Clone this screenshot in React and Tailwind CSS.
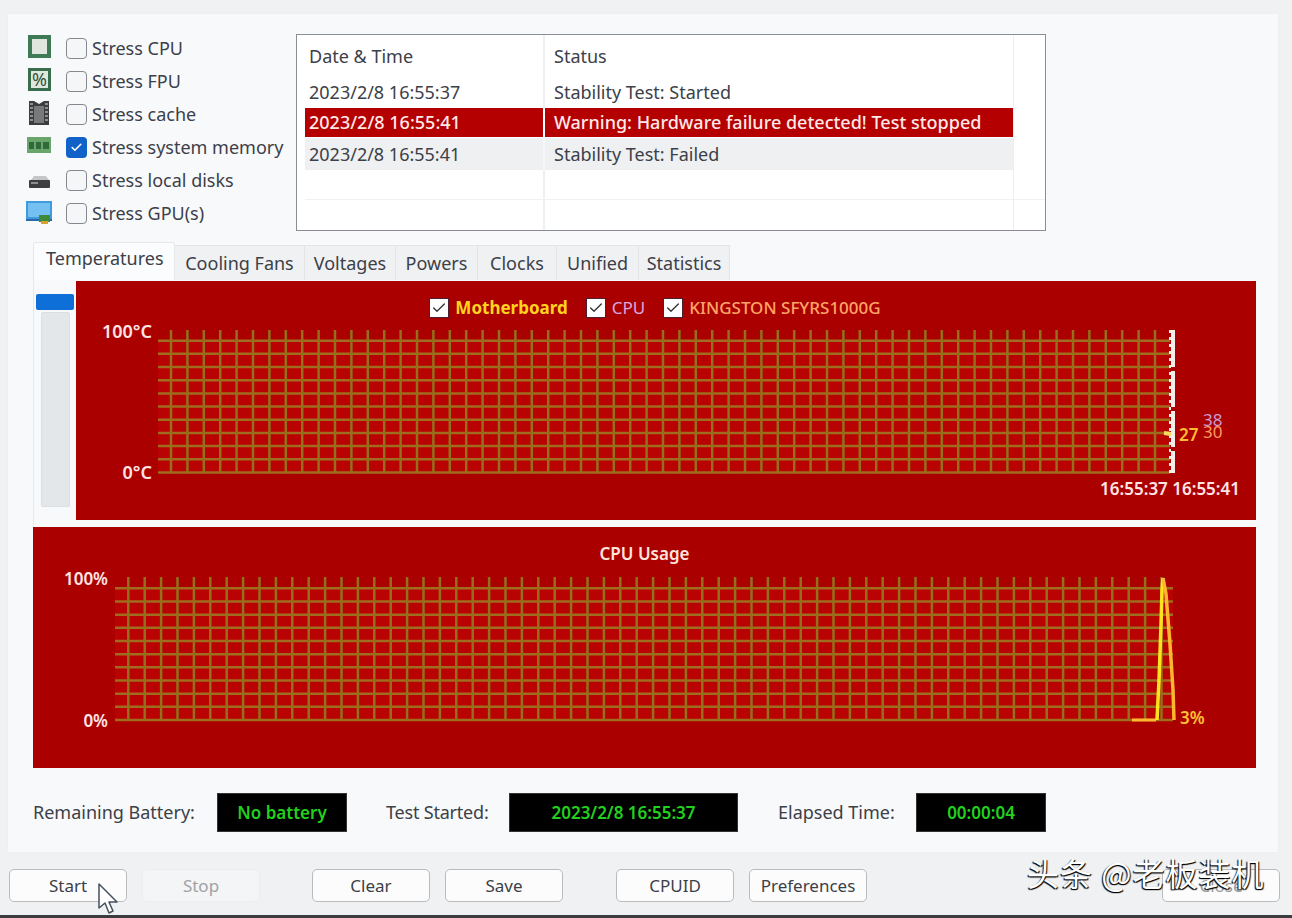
import { Check } from 'lucide-react';

// stress option rows, icon drawn per row
const stressRows = [
  { label: 'Stress CPU', icon: 'cpu' },
  { label: 'Stress FPU', icon: 'fpu' },
  { label: 'Stress cache', icon: 'cache' },
  { label: 'Stress system memory', icon: 'ram', checked: true },
  { label: 'Stress local disks', icon: 'disk' },
  { label: 'Stress GPU(s)', icon: 'gpu' },
];

const tabs = [
  { label: 'Cooling Fans', w: 'w-[130px]' },
  { label: 'Voltages', w: 'w-[91px]' },
  { label: 'Powers', w: 'w-[82px]' },
  { label: 'Clocks', w: 'w-[79px]' },
  { label: 'Unified', w: 'w-[82px]' },
  { label: 'Statistics', w: 'w-[91px]' },
];

function StressIcon({ type }) {
  if (type === 'cpu') {
    return (
      <svg className="overflow-visible" width="26" height="26" viewBox="1 2 26 26">
        <rect x="2" y="1" width="23" height="23" fill="#3f7a56" />
        <rect x="6" y="5" width="15" height="15" fill="#dfe6dd" />
      </svg>
    );
  }
  if (type === 'fpu') {
    return (
      <svg className="overflow-visible" width="26" height="26" viewBox="1 2 26 26">
        <rect x="2" y="1" width="23" height="23" fill="#3a6d4e" />
        <rect x="5" y="4" width="17" height="17" fill="#dfe8dc" />
        <text x="13.5" y="19" textAnchor="middle" fontSize="18" fill="#33513f">%</text>
      </svg>
    );
  }
  if (type === 'cache') {
    return (
      <svg className="overflow-visible" width="26" height="26" viewBox="1 2 26 26">
        <path d="M3 1h5l5 3 5-3h5v24H3z" fill="#3b3d3f" />
        <rect x="8" y="6" width="10" height="17" fill="#77797b" />
        <path d="M4 4h3M4 8h3M4 12h3M4 16h3M4 20h3M19 4h3M19 8h3M19 12h3M19 16h3M19 20h3" stroke="#a9abad" strokeWidth="1.5" />
      </svg>
    );
  }
  if (type === 'ram') {
    return (
      <svg className="overflow-visible" width="26" height="26" viewBox="1 2 26 26">
        <rect x="1" y="4" width="24" height="16" fill="#6aa56c" />
        <rect x="3" y="9" width="5" height="7" fill="#2f6a3d" />
        <rect x="10" y="9" width="5" height="7" fill="#2f6a3d" />
        <rect x="17" y="9" width="6" height="7" fill="#2f6a3d" />
      </svg>
    );
  }
  if (type === 'disk') {
    return (
      <svg className="overflow-visible" width="26" height="26" viewBox="1 2 26 26">
        <path d="M5 14l3-4h12l3 4z" fill="#c4c6c8" />
        <rect x="3" y="14" width="21" height="8" rx="1" fill="#3c3e40" />
        <rect x="5" y="16" width="7" height="2" fill="#8c8e90" />
      </svg>
    );
  }
  return (
    <svg className="overflow-visible" width="28" height="26" viewBox="2 1 28 26">
      <rect x="1" y="1" width="26" height="18" fill="#3f9ae0" />
      <rect x="3" y="3" width="22" height="14" fill="#74c0f0" />
      <path d="M1 19h26v2H1z" fill="#2a6aa8" />
      <rect x="14" y="15" width="11" height="7" fill="#3f8a3a" />
      <rect x="16" y="21" width="7" height="3" fill="#d8a030" />
    </svg>
  );
}

function Checkbox({ checked }) {
  if (checked) {
    return (
      <span className="w-[21px] h-[21px] rounded-[4px] bg-[#1062c8] flex items-center justify-center">
        <Check size={13} strokeWidth={3} className="text-white" />
      </span>
    );
  }
  return <span className="w-[21px] h-[21px] rounded-[4px] border-[1.5px] border-[#85888c] bg-[#f5f6f7]" />;
}

function LegendItem({ label, color, boxClass }) {
  return (
    <div className={`flex items-center ${boxClass}`}>
      <span className="w-[20px] h-[20px] bg-white border border-[#4a2030] flex items-center justify-center mr-[6px]">
        <Check size={16} strokeWidth={2} className="text-[#333]" />
      </span>
      <span className={`text-[17px] ${color}`}>{label}</span>
    </div>
  );
}

// brown chart grid: 11 horizontal lines, vertical ticks every 16.4px
function Grid({ left, right, top, count, firstX, vTop }) {
  const bottom = top + 131.7;
  return (
    <g strokeWidth="2.5">
      <rect x={left} y={top} width={right - left} height={bottom - top} fill="#b90202" />
      <g stroke="#a06c1e">
        {Array.from({ length: 11 }, (_, i) => (
          <line key={i} x1={left} x2={right} y1={top + i * 13.17} y2={top + i * 13.17} />
        ))}
      </g>
      <g stroke="#94701a">
        {Array.from({ length: count }, (_, i) => (
          <line key={i} x1={firstX + i * 16.4} x2={firstX + i * 16.4} y1={vTop} y2={bottom} />
        ))}
      </g>
    </g>
  );
}

function TempChart() {
  // svg coords are relative to the red frame (76, 281)
  return (
    <svg className="absolute inset-0" width="1180" height="239" viewBox="0 0 1180 239">
      <Grid left={82} right={1094} top={59.7} count={61} firstX={95} vTop={49} />
      <g stroke="#f2eeea" strokeWidth="4">
        <line x1="1097" x2="1097" y1="49" y2="86" />
        <line x1="1097" x2="1097" y1="90" y2="126" />
        <line x1="1097" x2="1097" y1="130" y2="166" />
        <line x1="1097" x2="1097" y1="170" y2="192" />
      </g>
      <line x1="1094" x2="1094" y1="49" y2="192" stroke="#f2eeea" strokeWidth="2" strokeDasharray="3 4" />
      <line x1="1088" x2="1095" y1="152" y2="153" stroke="#f5d860" strokeWidth="4" />
      <g fontSize="17" fontWeight="600">
        <text x="76" y="57" textAnchor="end" fontSize="18" fill="#ffe4e4">100°C</text>
        <text x="76" y="198" textAnchor="end" fontSize="18" fill="#ffe4e4">0°C</text>
        <text x="1103" y="160" fill="#ffbe30">27</text>
        <text x="1127" y="145" fontWeight="400" fill="#c79ad8">38</text>
        <text x="1127" y="157" fontWeight="400" fill="#ff9c62">30</text>
        <text x="1164" y="214" textAnchor="end" fontSize="17" fill="#ffe4e4">16:55:37 16:55:41</text>
      </g>
    </svg>
  );
}

function UsageChart() {
  // svg coords are relative to the red frame (33, 527)
  return (
    <svg className="absolute inset-0" width="1223" height="241" viewBox="0 0 1223 241">
      <Grid left={82} right={1140} top={61.3} count={64} firstX={95.3} vTop={50} />
      <path d="M1099 193h24" fill="none" stroke="#ffb52e" strokeWidth="3" />
      <path d="M1124 193l2-40 2-55 1-35 1-12" fill="none" stroke="#ffe21e" strokeWidth="3.5" />
      <path d="M1130 51l3 16 4 50 3 46 1 30" fill="none" stroke="#ffb52e" strokeWidth="3.5" />
      <g fontSize="17" fontWeight="600">
        <text x="75" y="58" textAnchor="end" fill="#ffe4e4">100%</text>
        <text x="75" y="200" textAnchor="end" fill="#ffe4e4">0%</text>
        <text x="1147" y="197" fill="#ffc030">3%</text>
      </g>
    </svg>
  );
}

function StatBox({ value, w }) {
  return (
    <div className={`${w} h-[39px] bg-black border border-[#333] flex items-center justify-center text-[17px] font-semibold text-[#22d01e]`}>
      {value}
    </div>
  );
}

function Btn({ label, disabled, className }) {
  return (
    <button
      type="button"
      className={`w-[118px] h-[33px] rounded-[5px] text-[17px] flex items-center justify-center ${
        disabled ? 'bg-[#f4f5f6] border border-[#eceded] text-[#a0a2a5]' : 'bg-[#fcfcfd] border border-[#b9bbbd] text-[#3c4048]'
      } ${className}`}
    >
      {label}
    </button>
  );
}

export default function App() {
  return (
    <div className="relative w-[1292px] h-[918px] overflow-hidden bg-[#f0f1f3] pt-[13px] font-['Noto_Sans','Noto_Sans_CJK_SC',sans-serif] text-[#3c4048]">
      {/* main panel */}
      <div className="ml-[7px] w-[1272px] h-[840px] bg-[#f8f9fb] border border-[#eeeff1] pl-[19px] pt-[18px]">
        <div className="flex">
          {/* stress options */}
          <div className="w-[269px] flex flex-col">
            {stressRows.map((row) => (
              <div key={row.label} className="h-[33px] flex items-center">
                <div className="w-[39px] flex items-center">
                  <StressIcon type={row.icon} />
                </div>
                <Checkbox checked={row.checked} />
                <span className="ml-[5px] text-[18px] whitespace-nowrap">{row.label}</span>
              </div>
            ))}
          </div>

          {/* log table */}
          <div className="mt-[2px] w-[750px] h-[197px] bg-white border border-[#8a8d92] pl-[8px] text-[18px] relative">
            <div className="flex h-[42px] items-center">
              <div className="w-[240px] pl-[4px] border-r-2 border-[#eef0f2] h-full flex items-center">Date &amp; Time</div>
              <div className="pl-[9px]">Status</div>
            </div>
            <div className="flex h-[31px] items-center">
              <div className="w-[240px] pl-[4px] border-r-2 border-[#eef0f2] h-full flex items-center">2023/2/8 16:55:37</div>
              <div className="pl-[9px]">Stability Test: Started</div>
            </div>
            <div className="flex h-[29px] w-[708px] items-center bg-[#b40000] text-[#ffe8e8] font-medium">
              <div className="w-[240px] pl-[4px] border-r-2 border-white h-full flex items-center">2023/2/8 16:55:41</div>
              <div className="pl-[9px]">Warning: Hardware failure detected! Test stopped</div>
            </div>
            <div className="flex h-[32px] w-[708px] items-center bg-[#eef0f1] mt-[1px]">
              <div className="w-[240px] pl-[4px] border-r-2 border-[#f6f7f8] h-full flex items-center">2023/2/8 16:55:41</div>
              <div className="pl-[9px]">Stability Test: Failed</div>
            </div>
            <div className="flex h-[30px] border-b border-[#f0f1f3]">
              <div className="w-[240px] border-r-2 border-[#eef0f2]" />
            </div>
            <div className="flex h-[30px]">
              <div className="w-[240px] border-r-2 border-[#eef0f2]" />
            </div>
            {/* last column divider */}
            <div className="absolute top-0 bottom-0 left-[716px] w-px bg-[#eceef0]" />
          </div>
        </div>

        <div className="ml-[6px] w-[1223px]">
          {/* tabs */}
          <div className="mt-[11px] h-[38px] flex items-end">
            <div className="w-[142px] h-[38px] bg-[#fbfcfd] border border-b-0 border-[#e6e8ea] rounded-t-[3px] text-[18px] pl-[12px] pt-[2px]">
              Temperatures
            </div>
            {tabs.map((tab) => (
              <div
                key={tab.label}
                className={`${tab.w} h-[35px] bg-[#f0f1f3] border-r border-t border-[#e2e4e6] text-[18px] flex items-center justify-center`}
              >
                {tab.label}
              </div>
            ))}
          </div>

          {/* temperature graph */}
          <div className="flex border-l border-[#e6e8ea] pt-px h-[246px]">
            <div className="w-[42px] pl-[2px] flex flex-col">
              <div className="mt-[13px] w-[38px] h-[16px] rounded-[2px] bg-[#0f6fd8]" />
              <div className="mt-[2px] ml-[5px] w-[29px] h-[195px] rounded-[2px] bg-[#e4e7ea] border border-[#dcdfe2]" />
            </div>
            <div className="relative w-[1180px] h-[239px] bg-[#ab0000]">
              <div className="pt-[14px] flex justify-center pr-[22px]">
                <LegendItem label="Motherboard" color="text-[#ffd21e] font-bold" boxClass="mr-[18px]" />
                <LegendItem label="CPU" color="text-[#d8a8e0]" boxClass="mr-[18px]" />
                <LegendItem label="KINGSTON SFYRS1000G" color="text-[#ffa566] font-medium" boxClass="" />
              </div>
              <TempChart />
            </div>
          </div>

          {/* cpu usage graph */}
          <div className="relative mt-px h-[241px] bg-[#ab0000]">
            <div className="pt-[14px] text-center text-[17px] font-semibold text-[#ffe4dc]">CPU Usage</div>
            <UsageChart />
          </div>

          {/* battery / time stats */}
          <div className="mt-[25px] flex items-center text-[18px]">
            <span className="w-[184px]">Remaining Battery:</span>
            <StatBox value="No battery" w="w-[130px]" />
            <span className="ml-[39px] w-[123px] tracking-[-0.2px]">Test Started:</span>
            <StatBox value="2023/2/8 16:55:37" w="w-[229px]" />
            <span className="ml-[40px] w-[138px]">Elapsed Time:</span>
            <StatBox value="00:00:04" w="w-[130px]" />
          </div>
        </div>
      </div>

      {/* bottom buttons */}
      <div className="mt-[16px] pl-[9px] flex">
        <Btn label="Start" />
        <Btn label="Stop" disabled className="ml-[15px]" />
        <Btn label="Clear" className="ml-[52px]" />
        <Btn label="Save" className="ml-[15px]" />
        <Btn label="CPUID" className="ml-[53px]" />
        <Btn label="Preferences" className="ml-[15px]" />
        <Btn label="Close" className="ml-[295px] text-[#9a9ca0]" />
      </div>

      {/* mouse pointer */}
      <svg className="absolute left-[97px] top-[883px]" width="24" height="32" viewBox="0 0 24 32">
        <path d="M2 1v24l6-5 4 10 4-2-4-9h8z" fill="#fff" stroke="#44505c" strokeWidth="1.5" strokeLinejoin="round" />
      </svg>

      {/* watermark */}
      <div className="absolute left-[1027px] top-[848px] text-[32px] tracking-[1px] text-white whitespace-nowrap [text-shadow:1px_1px_1px_#000,-1px_1px_1px_#000] font-['Noto_Sans_CJK_SC','Noto_Sans',sans-serif]">
        头条 @老板装机
      </div>

      {/* screen edge */}
      <div className="absolute left-0 right-0 bottom-0 h-[3px] bg-[#3a3c40]" />
    </div>
  );
}
